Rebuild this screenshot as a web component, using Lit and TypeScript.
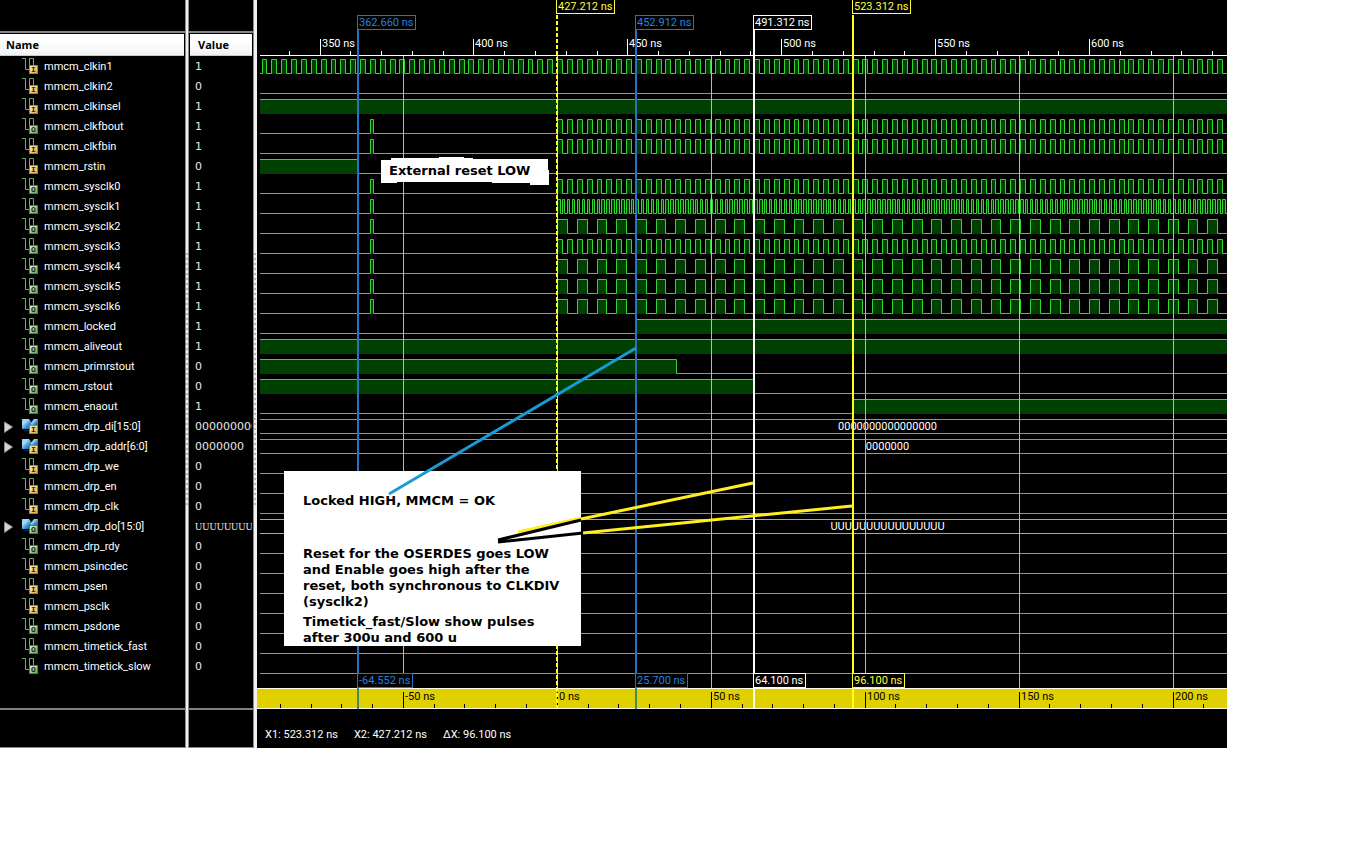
import { LitElement, html, svg, css, nothing } from "lit";
import { customElement, property, state } from "lit/decorators.js";

type Kind = "in" | "out";
interface Signal {
  name: string;
  value: string;
  kind: Kind;
  shape: string;
  bus?: string;
}

const LIMIT = 2400;
const START = 3;
const NS = 3.0785;
const LOCK_START = 300.6;
const CYCLE = 3.2 * NS;

const s = (name: string, value: string, kind: Kind, shape: string, bus?: string): Signal => ({ name, value, kind, shape, bus });

const SIGNALS: Signal[] = [
  s("mmcm_clkin1", "1", "in", "free"),
  s("mmcm_clkin2", "0", "in", "low"),
  s("mmcm_clkinsel", "1", "in", "high"),
  s("mmcm_clkfbout", "1", "out", "clk1"),
  s("mmcm_clkfbin", "1", "in", "clk1"),
  s("mmcm_rstin", "0", "in", "fall:101"),
  s("mmcm_sysclk0", "1", "out", "clk1"),
  s("mmcm_sysclk1", "1", "out", "clkhalf"),
  s("mmcm_sysclk2", "1", "out", "clk2"),
  s("mmcm_sysclk3", "1", "out", "clk1"),
  s("mmcm_sysclk4", "1", "out", "clk2"),
  s("mmcm_sysclk5", "1", "out", "clk2"),
  s("mmcm_sysclk6", "1", "out", "clk2"),
  s("mmcm_locked", "1", "out", "rise:379"),
  s("mmcm_aliveout", "1", "out", "high"),
  s("mmcm_primrstout", "0", "out", "fall:419"),
  s("mmcm_rstout", "0", "out", "fall:496"),
  s("mmcm_enaout", "1", "out", "rise:596"),
  s("mmcm_drp_di[15:0]", "0000000000000000", "in", "bus", "0000000000000000"),
  s("mmcm_drp_addr[6:0]", "0000000", "in", "bus", "0000000"),
  s("mmcm_drp_we", "0", "in", "low"),
  s("mmcm_drp_en", "0", "in", "low"),
  s("mmcm_drp_clk", "0", "in", "low"),
  s("mmcm_drp_do[15:0]", "UUUUUUUUUUUUUUUU", "out", "undef", "UUUUUUUUUUUUUUUU"),
  s("mmcm_drp_rdy", "0", "out", "low"),
  s("mmcm_psincdec", "0", "in", "low"),
  s("mmcm_psen", "0", "in", "low"),
  s("mmcm_psclk", "0", "in", "low"),
  s("mmcm_psdone", "0", "out", "low"),
  s("mmcm_timetick_fast", "0", "out", "low"),
  s("mmcm_timetick_slow", "0", "out", "low"),
];

function highSpans(shape: string): Array<[number, number]> {
  const [kind, at] = shape.split(":");
  if (kind === "high") return [[-5, LIMIT]];
  if (kind === "fall") return [[-5, Number(at)]];
  if (kind === "rise") return [[Number(at), LIMIT]];
  if (kind === "low") return [];
  const spans: Array<[number, number]> = [];
  let from = LOCK_START;
  let cycle = CYCLE;
  if (kind === "free") from = LOCK_START - 30 * CYCLE;
  else spans.push([113, 116]);
  if (kind === "clkhalf") cycle = CYCLE / 2;
  if (kind === "clk2") cycle = CYCLE * 2;
  for (let x = from; x < LIMIT; x += cycle) spans.push([Math.floor(x), Math.floor(x + cycle / 2)]);
  return spans;
}

function wavePaths(shape: string) {
  let line = "M" + START + " 17.5";
  let fill = "";
  for (const [a, b] of highSpans(shape)) {
    const l = Math.max(a, START);
    line += a < START ? `M${START} 3.5` : `H${a + 0.5}V3.5`;
    line += b >= LIMIT ? `H${b}` : `H${b + 0.5}V17.5`;
    fill += `M${l} 3H${b}V18H${l}Z`;
  }
  line += shape === "high" || shape.startsWith("rise") ? "" : `H${LIMIT}`;
  return { line, fill };
}

const range = (from: number, to: number) => Array.from({ length: to - from + 1 }, (_, i) => from + i);

@customElement("signal-icon")
export class SignalIcon extends LitElement {
  static properties = { kind: {}, bus: { type: Boolean } };
  declare kind: Kind;
  declare bus: boolean;

  static styles = css`
    :host { display: block; width: 16px; height: 16px; }
    svg { display: block; }
    .letter { font: bold 8px "Liberation Mono", monospace; fill: #2a2208; }
  `;

  render() {
    const isIn = this.kind === "in";
    return html`<svg width="16" height="16" viewBox="0 0 16 16" aria-hidden="true">
      <defs>
        <linearGradient id="b" x1="0" y1="0" x2="1" y2="1">
          <stop offset="0" stop-color="#8fd0f4" /><stop offset=".3" stop-color="#a8dcf8" /><stop offset=".6" stop-color="#3a92d2" /><stop offset="1" stop-color="#0c4f8c" />
        </linearGradient>
        <linearGradient id="g" x1="0" y1="0" x2="1" y2="1">
          <stop offset="0" stop-color=${isIn ? "#fff4c8" : "#def6d2"} /><stop offset="1" stop-color=${isIn ? "#dca83a" : "#5aa852"} />
        </linearGradient>
      </defs>
      ${this.bus
        ? svg`<path d="M0 1H7L10 5V11H0Z" fill="url(#b)"/><path d="M12 1H16V8H9V5Z" fill="url(#b)"/><path d="M2 12.5H8" stroke="#12283c"/>`
        : svg`<path d="M0 .5H3.5V11.5H7.5V.5H11.5V8" fill="none" stroke="#7aa876"/>`}
      <rect x="7.5" y="7.5" width="8" height="8" fill="url(#g)" stroke=${isIn ? "#a08440" : "#4a7f46"} />
      <text class="letter" x="11.5" y="14" text-anchor="middle">${isIn ? "I" : "O"}</text>
    </svg>`;
  }
}

@customElement("wave-row")
export class WaveRow extends LitElement {
  static properties = { signal: { attribute: false } };
  declare signal: Signal;

  static styles = css`
    :host { display: grid; height: 20px; overflow: hidden; }
    svg { grid-area: 1 / 1; width: 100%; height: 20px; display: block; }
    .fill { fill: #004000; }
    .line { fill: none; stroke: #44cc44; }
    .clock { stroke: #30d830; }
    .undef { stroke: #e09a5c; }
    .text { grid-area: 1 / 1; padding-left: 291px; text-align: center; font: 11px/22px Roboto, sans-serif; color: #fff; }
  `;

  render() {
    const { shape, bus } = this.signal;
    if (bus) {
      return html`<svg><path class="line ${shape}" d="M${START} 3.5H${LIMIT}M${START} 17.5H${LIMIT}" /></svg>
        <span class="text">${bus}</span>`;
    }
    const { line, fill } = wavePaths(shape);
    const clock = shape === "free" || shape.startsWith("clk");
    return html`<svg><path class="fill" d=${fill} /><path class="line ${clock ? "clock" : ""}" d=${line} /></svg>`;
  }
}

@customElement("time-ruler")
export class TimeRuler extends LitElement {
  @property({ type: Number }) origin = 0;
  @property({ type: Number }) first = 0;
  @property({ type: Number }) height = 0;
  @property({ type: Number }) depth = 0;
  @state() private room = 0;
  private watcher = new ResizeObserver(() => (this.room = this.clientWidth));

  static styles = css`
    :host { display: block; position: relative; overflow: hidden; font: 11px/14px Roboto, sans-serif; }
    svg { display: block; width: 100%; }
    path { fill: none; stroke: currentColor; }
    .mark { position: absolute; bottom: 4px; padding-left: 2px; white-space: nowrap; }
  `;

  connectedCallback() {
    super.connectedCallback();
    this.room = this.clientWidth;
    this.watcher.observe(this);
  }

  disconnectedCallback() {
    super.disconnectedCallback();
    this.watcher.disconnect();
  }

  render() {
    const h = this.height;
    const ticks = range(-14, 70)
      .map((k) => ({ k, x: Math.floor(this.origin + k * 10 * NS) }))
      .filter((t) => t.x > START && t.x < this.room);
    const d = ticks.map((t) => `M${t.x + 0.5} ${h}V${h - (t.k % 5 === 0 ? this.depth : 4)}`).join("");
    const marks = ticks.filter((t) => t.k % 5 === 0 && t.x + 40 < this.room);
    return html`<svg height=${h}><path d=${d} /></svg>
      ${marks.map((t) => html`<span class="mark" style="left:${t.x}px">${this.first + t.k * 10} ns</span>`)}`;
  }
}

interface Cursor { x: number; time: string; delta?: string; tone: string; high?: boolean; dashed?: boolean }
const CURSORS: Cursor[] = [
  { x: 100, time: "362.660 ns", delta: "-64.552 ns", tone: "blue" },
  { x: 299, time: "427.212 ns", tone: "yellow", high: true, dashed: true },
  { x: 378, time: "452.912 ns", delta: "25.700 ns", tone: "blue" },
  { x: 496, time: "491.312 ns", delta: "64.100 ns", tone: "white" },
  { x: 595, time: "523.312 ns", delta: "96.100 ns", tone: "yellow", high: true },
];

@customElement("wave-view")
export class WaveView extends LitElement {
  static styles = css`
    :host { display: block; position: relative; overflow: hidden; background: #000; color: #fff; }
    .axis { height: 1px; margin-left: 3px; background: #fff; }
    .space { height: 12px; }
    .bottom { background: #e0d000; color: #000; border-top: 1px solid #fffbe0; border-bottom: 1px solid #fffbe0; }
    .status { display: flex; gap: 16px; height: 39px; padding: 18px 0 0 8px; box-sizing: border-box; font: 11px/16px Roboto, sans-serif; }
    .over { position: absolute; left: 0; top: 0; width: 100%; height: 100%; }
    .tag { position: absolute; border: 1px solid; background: #000; padding: 0 2px 0 1px; font: 11px/13px Roboto, sans-serif; white-space: nowrap; }
    .row-high { top: -1px; }
    .row-low { top: 15px; }
    .row-delta { top: 673px; }
    .blue { color: #2a82dc; border-color: #2a70c4; }
    .yellow { color: #ffff38; }
    .white { color: #fff; }
    .note { position: absolute; color: #000; font: bold 13px/16px "DejaVu Sans", Verdana, sans-serif; white-space: nowrap; }
    .note p { margin: 0; }
    .reset { left: 132px; top: 163px; }
    .locked { left: 27px; top: 471px; width: 278px; height: 153px; padding: 22px 0 0 19px; background: #fff; }
    .locked .second { margin: 37px 0 4px; }
  `;

  render() {
    const grid = range(-1, 20).filter((k) => k !== 0).map((k) => `M${Math.floor(300.3 + k * 50 * NS) + 0.5} 56V688`).join("");
    const tone: Record<string, string> = { blue: "#2672c4", yellow: "#ffff20", white: "#fff" };
    return html`
      <time-ruler class="top" .origin=${63} .first=${350} .height=${55} .depth=${16}></time-ruler>
      <div class="axis"></div>
      ${SIGNALS.map((sig) => html`<wave-row .signal=${sig}></wave-row>`)}
      <div class="space"></div>
      <time-ruler class="bottom" .origin=${300.3} .first=${0} .height=${19} .depth=${16}></time-ruler>
      <div class="status"><span>X1: 523.312 ns</span><span>X2: 427.212 ns</span><span>ΔX: 96.100 ns</span></div>
      <svg class="over" aria-hidden="true">
        <path d=${grid} stroke="#b8b8b8" />
        <path d="M300.5 56V688" stroke="#d8d8b0" />
        ${CURSORS.map((c) => svg`<path d="M${c.x + 1} ${c.high ? 15 : 30}V${c.dashed ? 708 : 688}" stroke=${tone[c.tone]} stroke-width="2" stroke-dasharray=${c.dashed ? "4 2" : nothing}/>
          ${c.dashed ? nothing : svg`<path d="M${c.x + 1} 688V709" stroke=${c.tone === "blue" ? "#408868" : tone[c.tone]} stroke-width="2"/>`}`)}
        <path d="M124 160H134V158H182V157H207V158H216V159H291V170H292V185H273V183H235V182H140V183H124Z" fill="#fff" />
      </svg>
      ${CURSORS.map((c) => html`
        <span class="tag ${c.tone} ${c.high ? "row-high" : "row-low"}" style="left:${c.x}px">${c.time}</span>
        ${c.delta ? html`<span class="tag row-delta ${c.tone}" style="left:${c.x}px">${c.delta}</span>` : nothing}`)}
      <div class="note reset">External reset LOW</div>
      <div class="note locked">
        <p>Locked HIGH, MMCM = OK</p>
        <p class="second">Reset for the OSERDES goes LOW<br />and Enable goes high after the<br />reset, both synchronous to CLKDIV<br />(sysclk2)</p>
        <p>Timetick_fast/Slow show pulses<br />after 300u and 600 u</p>
      </div>
      <svg class="over" aria-hidden="true" fill="none" stroke-width="3">
        <path d="M132 494L379 348" stroke="#189ad6" />
        <path d="M261 532L324 518" stroke="#ffee20" />
        <path d="M324 519L496 483M326 533L595 506" stroke="#ffee20" />
        <path d="M241 540L324 520M241 542L326 533" stroke="#000" />
      </svg>`;
  }
}

@customElement("app-root")
export class AppRoot extends LitElement {
  static styles = css`
    :host { display: block; min-height: 100vh; background: #fff; font: 11px/20px "Open Sans", "Noto Sans", sans-serif; color: #fff; }
    .frame { display: grid; grid-template-columns: 185px 4px 64px 4px minmax(0, 1fr); margin-right: 135px; }
    .pane { display: flex; flex-direction: column; background: #000; overflow: hidden; border-bottom: 1px solid #85878a; min-width: 0; }
    .head { height: 31px; border-bottom: 2px solid #85878a; }
    .foot { flex: 1; border-top: 2px solid #7d8288; margin-top: 32px; }
    table { border-collapse: separate; border-spacing: 0; table-layout: fixed; width: 100%; margin-top: 1px; padding-right: 1px; }
    th, td { padding: 0; text-align: left; height: 20px; overflow: hidden; white-space: nowrap; }
    th { height: 21px; line-height: 21px; font-weight: bold; color: #000; background: linear-gradient(#fff 40%, #eff1f3); border-bottom: 1px solid #c8c8c8; }
    .names th { padding-left: 6px; }
    .values th { padding-left: 8px; }
    .values { padding-left: 1px; }
    .values td { height: 18px; padding: 2px 0 0 5px; font: 11px/18px "DejaVu Sans", sans-serif; color: #e8e8e8; }
    .values .unknown { font: 10px/18px "Liberation Serif", serif; }
    .cell { display: flex; align-items: center; height: 20px; padding-left: 4px; }
    .slot { width: 18px; height: 20px; display: flex; align-items: center; }
    .label { padding: 2px 0 0 6px; font: 11px/18px Roboto, sans-serif; }
    button { border: 0; padding: 0; margin: 0; background: none; width: 9px; height: 14px; display: block; }
    button svg { display: block; }
    .split { background: #f2f0f0; border-left: 1px solid #8a8a8a; }
    .narrow { border-right: 1px solid #8a8a8a; }
    .grip { height: 255px; margin-top: 253px; background: repeating-linear-gradient(#b9b9b9 0 2px, #f2f0f0 2px 5px); width: 2px; }
  `;

  render() {
    return html`<main class="frame">
      <section class="pane">
        <div class="head"></div>
        <table class="names">
          <thead><tr><th scope="col">Name</th></tr></thead>
          <tbody>${SIGNALS.map((sig) => html`<tr><td><div class="cell">
            <span class="slot">${sig.bus
              ? html`<button type="button" aria-label="Expand ${sig.name}"><svg width="9" height="14" viewBox="0 0 9 14"><path d="M.5 3V13.5L8.5 8Z" fill="#d4d4d4" stroke="#8c8c8c" /></svg></button>`
              : nothing}</span>
            <signal-icon .kind=${sig.kind} .bus=${!!sig.bus}></signal-icon>
            <span class="label">${sig.name}</span></div></td></tr>`)}</tbody>
        </table>
        <div class="foot"></div>
      </section>
      <div class="split narrow"><div class="grip"></div></div>
      <section class="pane">
        <div class="head"></div>
        <table class="values">
          <thead><tr><th scope="col">Value</th></tr></thead>
          <tbody>${SIGNALS.map((sig) => html`<tr><td class=${sig.shape === "undef" ? "unknown" : ""}>${sig.value}</td></tr>`)}</tbody>
        </table>
        <div class="foot"></div>
      </section>
      <div class="split"><div class="grip"></div></div>
      <wave-view></wave-view>
    </main>`;
  }
}
